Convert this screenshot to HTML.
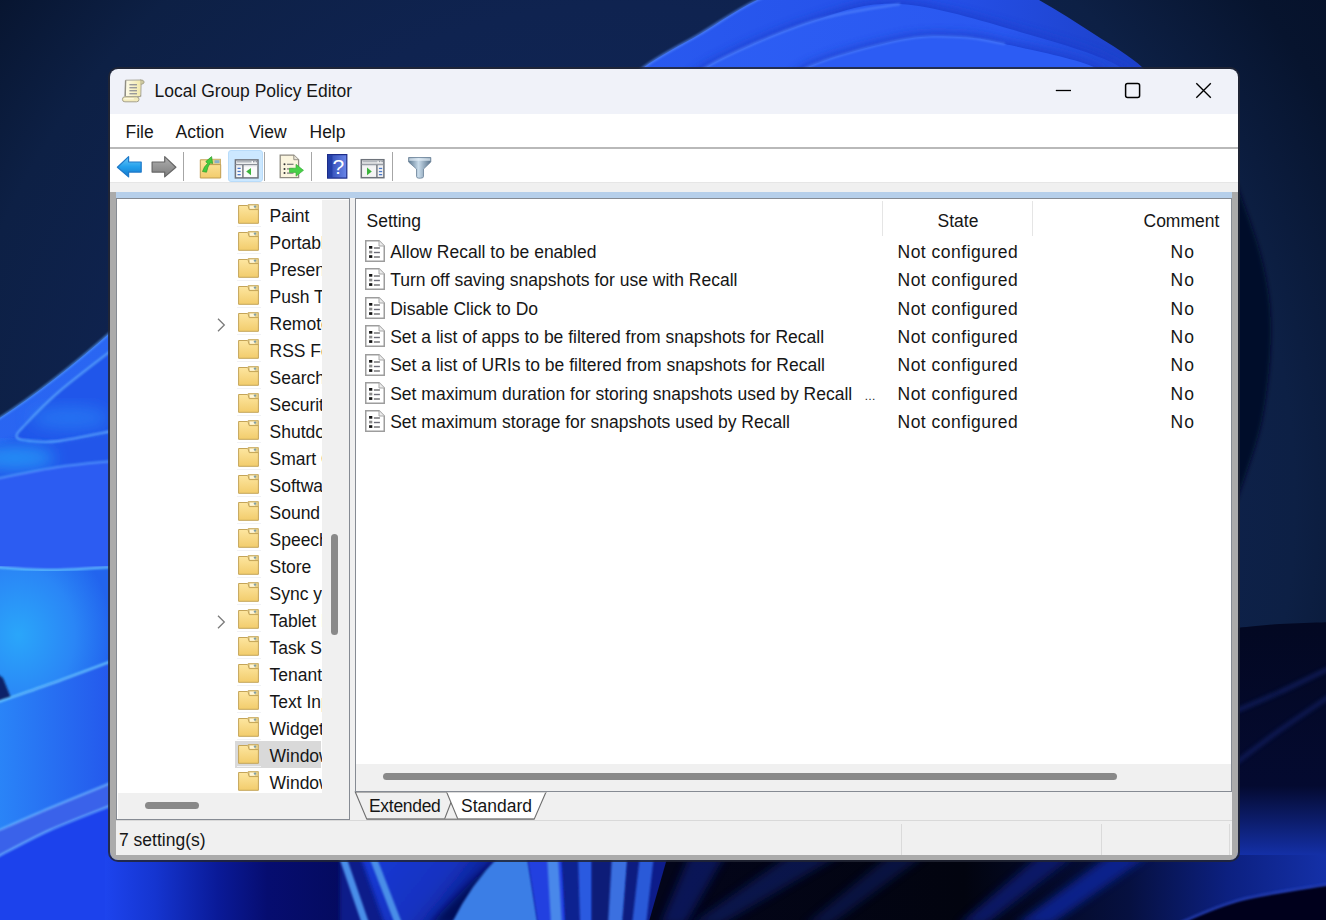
<!DOCTYPE html>
<html><head><meta charset="utf-8"><style>
*{margin:0;padding:0;box-sizing:border-box}
html,body{width:1326px;height:920px;overflow:hidden;background:#0b1a3a}
body{position:relative;font-family:"Liberation Sans",sans-serif}
.bg{position:absolute;left:0;top:0}
.t{position:absolute;line-height:20px;white-space:nowrap;color:#000}
.b{position:absolute}
.ic{position:absolute;overflow:visible}
.win{position:absolute;left:110px;top:69px;width:1128px;height:791px;border-radius:8px;box-shadow:0 0 0 2px rgba(34,38,52,0.85)}
.treeclip{position:absolute;left:117px;top:199px;width:205px;height:593.5px;overflow:hidden}
</style></head>
<body>
<svg width="0" height="0" style="position:absolute">
<defs>
 <linearGradient id="fold" x1="0" y1="0" x2="0" y2="1"><stop offset="0" stop-color="#fde6a0"/><stop offset="1" stop-color="#f2cc6c"/></linearGradient>
 <linearGradient id="arrB" x1="0" y1="0" x2="0" y2="1"><stop offset="0" stop-color="#6cc8f8"/><stop offset="0.5" stop-color="#23a0ec"/><stop offset="1" stop-color="#1478cc"/></linearGradient>
 <linearGradient id="arrG" x1="0" y1="0" x2="0" y2="1"><stop offset="0" stop-color="#b0b0b0"/><stop offset="1" stop-color="#7c7c7c"/></linearGradient>
 <linearGradient id="help" x1="0" y1="0" x2="1" y2="0"><stop offset="0" stop-color="#2a46b0"/><stop offset="1" stop-color="#6a86e8"/></linearGradient>
 <linearGradient id="funnel" x1="0" y1="0" x2="1" y2="0"><stop offset="0" stop-color="#5d7890"/><stop offset="0.45" stop-color="#c8dbea"/><stop offset="1" stop-color="#58728a"/></linearGradient>
 <linearGradient id="scroll" x1="0" y1="0" x2="1" y2="0"><stop offset="0" stop-color="#fdfbea"/><stop offset="1" stop-color="#f2e8a8"/></linearGradient>
</defs></svg><svg class="bg" width="1326" height="920" viewBox="0 0 1326 920"><defs>
 <radialGradient id="gBase" cx="620" cy="500" r="900" gradientUnits="userSpaceOnUse">
  <stop offset="0" stop-color="#12285a"/><stop offset="0.55" stop-color="#0f2350"/><stop offset="0.75" stop-color="#0d2045"/><stop offset="0.9" stop-color="#07142e"/><stop offset="1" stop-color="#06112a"/>
 </radialGradient>
 <linearGradient id="gP1" x1="0" y1="0" x2="1" y2="0">
  <stop offset="0" stop-color="#2a5cf2"/><stop offset="0.6" stop-color="#2550e8"/><stop offset="1" stop-color="#1a3cc0"/>
 </linearGradient>
 <linearGradient id="gP2" x1="0" y1="0" x2="1" y2="0">
  <stop offset="0" stop-color="#2d5ff5"/><stop offset="0.7" stop-color="#2a58f0"/><stop offset="1" stop-color="#1e44d0"/>
 </linearGradient>
 <linearGradient id="gL1" x1="0" y1="0" x2="0" y2="1">
  <stop offset="0" stop-color="#2a66f2"/><stop offset="1" stop-color="#2660f0"/>
 </linearGradient>
 <radialGradient id="gCyan" cx="0.2" cy="0.5" r="0.8">
  <stop offset="0" stop-color="#2aa6fa"/><stop offset="0.6" stop-color="#2a86f6"/><stop offset="1" stop-color="#2264ee"/>
 </radialGradient>
 <linearGradient id="gLow" x1="0" y1="0" x2="1" y2="0">
  <stop offset="0" stop-color="#2a86f8"/><stop offset="1" stop-color="#2458ec"/>
 </linearGradient>
 <linearGradient id="gBotL" x1="0" y1="0" x2="1" y2="0">
  <stop offset="0" stop-color="#1d44ee"/><stop offset="0.2" stop-color="#1535d0"/><stop offset="0.45" stop-color="#0a1a98"/><stop offset="0.65" stop-color="#060d70"/><stop offset="1" stop-color="#040a5c"/>
 </linearGradient>
 <linearGradient id="gRB" x1="0" y1="0" x2="0" y2="1">
  <stop offset="0" stop-color="#030822"/><stop offset="0.7" stop-color="#040a30"/><stop offset="1" stop-color="#1430a8"/>
 </linearGradient>
 <linearGradient id="gBR" x1="668" y1="0" x2="1326" y2="0" gradientUnits="userSpaceOnUse">
  <stop offset="0" stop-color="#03051a"/><stop offset="0.45" stop-color="#02040f"/><stop offset="0.7" stop-color="#061040"/><stop offset="0.85" stop-color="#0c2080"/><stop offset="1" stop-color="#1430a8"/>
 </linearGradient>
 <linearGradient id="gMid" x1="0" y1="0" x2="1" y2="0.4">
  <stop offset="0" stop-color="#1a3ad8"/><stop offset="0.6" stop-color="#1432c0"/><stop offset="1" stop-color="#0a1878"/>
 </linearGradient>
 <filter id="b1" x="-20%" y="-20%" width="140%" height="140%"><feGaussianBlur stdDeviation="1"/></filter>
 <filter id="b2" x="-20%" y="-20%" width="140%" height="140%"><feGaussianBlur stdDeviation="2"/></filter>
 <filter id="b4" x="-20%" y="-20%" width="140%" height="140%"><feGaussianBlur stdDeviation="4"/></filter>
 <filter id="b8" x="-30%" y="-30%" width="160%" height="160%"><feGaussianBlur stdDeviation="8"/></filter>
</defs><rect width="1326" height="920" fill="url(#gBase)"/><path d="M1236.0 182.0 C1240.3 195.0 1256.2 235.3 1262.0 260.0 C1267.8 284.7 1271.0 303.3 1271.0 330.0 C1271.0 356.7 1267.8 391.2 1262.0 420.0 C1256.2 448.8 1240.3 489.2 1236.0 503.0 Z" fill="#050b2c" filter="url(#b2)"/><path d="M1236 628  C1243.3 627.3 1264.3 625.0 1280.0 624.0 C1295.7 623.0 1321.7 622.3 1330.0 622.0 L1330 856 L1236 856 Z" fill="url(#gRB)"/><path d="M1236.0 711.0 C1243.3 707.8 1264.3 699.2 1280.0 692.0 C1295.7 684.8 1321.7 672.0 1330.0 668.0" stroke="#2038a0" stroke-width="3" fill="none" opacity="0.55" filter="url(#b2)"/><path d="M1236.0 763.0 C1243.3 757.5 1264.3 741.2 1280.0 730.0 C1295.7 718.8 1321.7 701.7 1330.0 696.0" stroke="#2038a0" stroke-width="3" fill="none" opacity="0.5" filter="url(#b2)"/><path d="M560.0 160.0 C566.7 151.7 586.2 125.3 600.0 110.0 C613.8 94.7 626.3 80.7 643.0 68.0 C659.7 55.3 681.0 45.3 700.0 34.0 C719.0 22.7 735.3 10.7 757.0 0.0 C778.7 -10.7 806.2 -23.0 830.0 -30.0 C853.8 -37.0 875.0 -42.0 900.0 -42.0 C925.0 -42.0 956.8 -37.0 980.0 -30.0 C1003.2 -23.0 1020.0 -10.7 1039.0 0.0 C1058.0 10.7 1076.7 22.7 1094.0 34.0 C1111.3 45.3 1129.5 55.3 1143.0 68.0 C1156.5 80.7 1165.5 94.7 1175.0 110.0 C1184.5 125.3 1195.8 151.7 1200.0 160.0 Z" fill="url(#gP1)"/><path d="M600.0 110.0 C607.2 103.0 626.3 80.7 643.0 68.0 C659.7 55.3 681.0 45.3 700.0 34.0 C719.0 22.7 735.3 10.7 757.0 0.0 C778.7 -10.7 817.8 -25.0 830.0 -30.0" stroke="#5a90ff" stroke-width="2.5" fill="none" opacity="0.7" filter="url(#b1)"/><path d="M660.0 110.0 C667.4 103.0 679.5 82.7 704.5 68.0 C729.5 53.3 777.4 32.7 810.0 22.0 C842.6 11.3 863.8 2.0 900.0 4.0 C936.2 6.0 990.0 23.3 1027.0 34.0 C1064.0 44.7 1101.5 55.3 1122.0 68.0 C1142.5 80.7 1145.3 103.0 1150.0 110.0 Z" fill="#1a3ccc" filter="url(#b4)" opacity="0.8" transform="translate(0,-4)"/><path d="M660.0 110.0 C667.4 103.0 679.5 82.7 704.5 68.0 C729.5 53.3 777.4 32.7 810.0 22.0 C842.6 11.3 863.8 2.0 900.0 4.0 C936.2 6.0 990.0 23.3 1027.0 34.0 C1064.0 44.7 1101.5 55.3 1122.0 68.0 C1142.5 80.7 1145.3 103.0 1150.0 110.0 Z" fill="url(#gP2)"/><path d="M660.0 110.0 C667.4 103.0 679.5 82.7 704.5 68.0 C729.5 53.3 777.4 32.7 810.0 22.0 C842.6 11.3 885.0 7.0 900.0 4.0" stroke="#5a8cff" stroke-width="2" fill="none" opacity="0.7" filter="url(#b1)"/><path d="M780.0 100.0 C784.3 94.7 786.0 78.0 806.0 68.0 C826.0 58.0 874.3 45.2 900.0 40.0 C925.7 34.8 942.5 36.3 960.0 37.0 C977.5 37.7 982.3 38.8 1005.0 44.0 C1027.7 49.2 1077.7 58.7 1096.0 68.0 C1114.3 77.3 1111.8 94.7 1115.0 100.0 Z" fill="#1a3ccc" filter="url(#b4)" opacity="0.8" transform="translate(0,-4)"/><path d="M780.0 100.0 C784.3 94.7 786.0 78.0 806.0 68.0 C826.0 58.0 874.3 45.2 900.0 40.0 C925.7 34.8 942.5 36.3 960.0 37.0 C977.5 37.7 982.3 38.8 1005.0 44.0 C1027.7 49.2 1077.7 58.7 1096.0 68.0 C1114.3 77.3 1111.8 94.7 1115.0 100.0 Z" fill="#2c5cf4"/><path d="M780.0 100.0 C784.3 94.7 786.0 78.0 806.0 68.0 C826.0 58.0 874.3 45.2 900.0 40.0 C925.7 34.8 942.5 36.3 960.0 37.0 C977.5 37.7 997.5 42.8 1005.0 44.0" stroke="#5a8cff" stroke-width="2" fill="none" opacity="0.6" filter="url(#b1)"/><path d="M-5 421 Q 50 386 112 331 L112 930 L-5 930 Z" fill="url(#gL1)"/><path d="M-5 421 Q 50 386 112 331" stroke="#58a0ff" stroke-width="2" fill="none" opacity="0.8" filter="url(#b1)"/><path d="M112.0 350.0 C103.1 357.0 73.2 379.5 58.7 392.0 C44.2 404.5 32.0 417.5 25.0 425.0 C18.0 432.5 15.8 434.3 16.6 437.0 C17.4 439.7 23.0 440.3 30.0 441.0 C37.0 441.7 45.0 442.7 58.7 441.0 C72.4 439.3 103.1 432.7 112.0 431.0 Z" fill="#2056ea"/><path d="M112 431  C103.1 432.7 72.4 439.3 58.7 441.0 C45.0 442.7 37.0 441.7 30.0 441.0 C23.0 440.3 18.8 437.7 16.6 437.0 L-5 445 L-5 480 L112 480 Z" fill="#2356ea" filter="url(#b2)"/><ellipse cx="70" cy="418" rx="40" ry="12" fill="#2a88f8" opacity="0.55" filter="url(#b8)"/><path d="M112.0 350.0 C103.1 357.0 73.2 379.5 58.7 392.0 C44.2 404.5 32.0 417.5 25.0 425.0 C18.0 432.5 15.8 434.3 16.6 437.0 C17.4 439.7 23.0 440.3 30.0 441.0 C37.0 441.7 45.0 442.7 58.7 441.0 C72.4 439.3 103.1 432.7 112.0 431.0" stroke="#6ab8ff" stroke-width="1.8" fill="none" opacity="0.8" filter="url(#b1)"/><ellipse cx="15" cy="458" rx="40" ry="12" fill="#28a4fa" opacity="0.7" filter="url(#b8)"/><path d="M-5 479  C5.5 477.0 38.5 470.0 58.0 467.0 C77.5 464.0 103.0 462.0 112.0 461.0 L112 568 L-5 568 Z" fill="#2c5cf2"/><path d="M-5.0 479.0 C5.5 477.0 38.5 470.0 58.0 467.0 C77.5 464.0 103.0 462.0 112.0 461.0" stroke="#60a8ff" stroke-width="2" fill="none" opacity="0.7" filter="url(#b1)"/><path d="M-5 567  C4.2 567.5 30.5 570.0 50.0 570.0 C69.5 570.0 101.7 567.5 112.0 567.0 L112 661 L-5 703 Z" fill="url(#gCyan)"/><path d="M-5.0 567.0 C4.2 567.5 30.5 570.0 50.0 570.0 C69.5 570.0 101.7 567.5 112.0 567.0" stroke="#70d0ff" stroke-width="2.2" fill="none" opacity="0.9" filter="url(#b1)"/><path d="M-5 672 L3 678 L11 698 L-5 702 Z" fill="#0c2468" filter="url(#b1)"/><path d="M-5 703  C4.2 699.8 30.5 691.0 50.0 684.0 C69.5 677.0 101.7 664.8 112.0 661.0 L112 783 L-5 832 Z" fill="url(#gLow)"/><path d="M-5.0 703.0 C4.2 699.8 30.5 691.0 50.0 684.0 C69.5 677.0 101.7 664.8 112.0 661.0" stroke="#70d0ff" stroke-width="2.2" fill="none" opacity="0.9" filter="url(#b1)"/><path d="M-5 832  C4.2 828.0 30.5 816.2 50.0 808.0 C69.5 799.8 101.7 786.8 112.0 782.5 L112 805  C101.7 809.2 69.5 821.2 50.0 830.0 C30.5 838.8 4.2 853.3 -5.0 858.0 Z" fill="#3a62ea"/><path d="M-5 858  C4.2 853.3 30.5 838.8 50.0 830.0 C69.5 821.2 101.7 809.2 112.0 805.0 L112 930 L-5 930 Z" fill="#1c42ec"/><path d="M-5.0 832.0 C4.2 828.0 30.5 816.2 50.0 808.0 C69.5 799.8 101.7 786.8 112.0 782.5" stroke="#70b8ff" stroke-width="2" fill="none" opacity="0.85" filter="url(#b1)"/><path d="M-5.0 858.0 C4.2 853.3 30.5 838.8 50.0 830.0 C69.5 821.2 101.7 809.2 112.0 805.0" stroke="#70b8ff" stroke-width="2" fill="none" opacity="0.85" filter="url(#b1)"/><rect x="105" y="855" width="250" height="70" fill="url(#gBotL)"/><rect x="340" y="852" width="330" height="75" fill="#0a1a8a" filter="url(#b2)"/><path d="M360 855 L502 855 Q470 885 451 925 L385 925 Z" fill="url(#gMid)" filter="url(#b2)"/><path d="M430 925 Q470 880 500 858 L505 925 Z" fill="#060d58" filter="url(#b4)"/><path d="M500 855 L527 855 L538 925 L451 925 Q470 885 500 855 Z" fill="#3a7ee6" filter="url(#b1)"/><path d="M342 855 L366 925" stroke="#4a8ee8" stroke-width="7" fill="none" filter="url(#b1)"/><path d="M372 855 L399 925" stroke="#4a8ee8" stroke-width="7" fill="none" filter="url(#b1)"/><path d="M527 855 L562 855 L566 925 L538 925 Z" fill="#2040e0" filter="url(#b1)"/><path d="M547 855 L558 855 L562 925 L551 925 Z" fill="#4a88ea" filter="url(#b1)"/><path d="M562 855 L578 855 L580 925 L566 925 Z" fill="#0c2090" filter="url(#b1)"/><path d="M578 855 L592 855 L592 925 L580 925 Z" fill="#2a5ae0" filter="url(#b1)"/><path d="M592 855 L612 855 L610 925 L592 925 Z" fill="#0a1a78" filter="url(#b1)"/><path d="M612 855 L628 855 L624 925 L608 925 Z" fill="#3a70e0" filter="url(#b1)"/><path d="M628 855 L640 855 L634 925 L622 925 Z" fill="#0c1e80" filter="url(#b1)"/><path d="M640 855 L654 855 L646 925 L632 925 Z" fill="#2a5ad8" filter="url(#b1)"/><path d="M668 855 L1330 855 L1330 925 L648 925 Z" fill="url(#gBR)"/><path d="M690 855 L725 855 L685 925 L660 925 Z" fill="#0e1c70" opacity="0.7" filter="url(#b4)"/><path d="M790 855 L840 855 L720 925 L690 925 Z" fill="#0c1a60" opacity="0.7" filter="url(#b4)"/><path d="M890 855 L925 855 L830 925 L805 925 Z" fill="#0c1a60" opacity="0.6" filter="url(#b4)"/><path d="M1040 855 L1075 855 L985 925 L958 925 Z" fill="#0e1e78" opacity="0.8" filter="url(#b4)"/><path d="M1110 855 L1150 855 L1050 925 L1015 925 Z" fill="#1028a0" opacity="0.8" filter="url(#b4)"/><path d="M1175 925  C1185.8 920.8 1214.2 906.8 1240.0 900.0 C1265.8 893.2 1315.0 886.7 1330.0 884.0 L1330 930 L1175 930 Z" fill="#02051a" filter="url(#b1)"/><path d="M1175.0 925.0 C1185.8 920.8 1214.2 906.8 1240.0 900.0 C1265.8 893.2 1315.0 886.7 1330.0 884.0" stroke="#2f50e0" stroke-width="2.5" fill="none" opacity="0.7" filter="url(#b1)"/></svg><div class="win"></div><div class="b" style="left:110px;top:69px;width:1128.00px;height:45.00px;background:#f0f2f9;border-radius:8px 8px 0 0"></div><div class="b" style="left:110px;top:114px;width:1128.00px;height:32.50px;background:#fff"></div><div class="b" style="left:110px;top:146.5px;width:1128.00px;height:2.00px;background:#b9b9b9"></div><div class="b" style="left:110px;top:148.5px;width:1128.00px;height:33.50px;background:#fff"></div><div class="b" style="left:110px;top:182px;width:1128.00px;height:1.00px;background:#e6e6e6"></div><div class="b" style="left:110px;top:183px;width:1128.00px;height:9.00px;background:#f0f0f0"></div><div class="b" style="left:110px;top:185px;width:1128.00px;height:675.00px;background:#ababab;border-radius:0 0 8px 8px"></div><div class="b" style="left:110px;top:183px;width:1128.00px;height:9.00px;background:#f0f0f0"></div><div class="b" style="left:116px;top:192px;width:1116.00px;height:6.00px;background:#b6cfea"></div><div class="b" style="left:116px;top:198px;width:1116.00px;height:657.00px;background:#f0f0f0"></div><div class="b" style="left:116px;top:198px;width:234.00px;height:622.00px;border:1.5px solid #868b93;background:#fff"></div><div class="b" style="left:322px;top:199.5px;width:26.50px;height:619.00px;background:#f0f0f0"></div><div class="b" style="left:117.5px;top:792.5px;width:231.00px;height:26.00px;background:#f0f0f0"></div><div class="b" style="left:331px;top:534.3px;width:7.20px;height:101.10px;background:#898989;border-radius:4px"></div><div class="b" style="left:145px;top:801.5px;width:53.50px;height:7.00px;background:#898989;border-radius:4px"></div><div class="b" style="left:350px;top:198px;width:4.50px;height:622.00px;background:#f0f0f0"></div><div class="b" style="left:354.5px;top:198px;width:877.50px;height:594.00px;border:1.5px solid #868b93;background:#fff"></div><div class="b" style="left:356px;top:764px;width:874.50px;height:26.50px;background:#f0f0f0"></div><div class="b" style="left:383px;top:773px;width:733.50px;height:7.00px;background:#898989;border-radius:4px"></div><div class="b" style="left:882px;top:201px;width:1.00px;height:35.00px;background:#e5e5e5"></div><div class="b" style="left:1032px;top:201px;width:1.00px;height:35.00px;background:#e5e5e5"></div><div class="b" style="left:116px;top:819.5px;width:1116.00px;height:1.00px;background:#d9d9d9"></div><div class="b" style="left:901px;top:823.5px;width:1.00px;height:31.00px;background:#dadada"></div><div class="b" style="left:1101px;top:823.5px;width:1.00px;height:31.00px;background:#dadada"></div><div class="b" style="left:1228.5px;top:823.5px;width:1.00px;height:31.00px;background:#dadada"></div><svg class="ic" style="left:0;top:0" width="1326" height="920">
<path d="M355.3 792 L366.7 819 L444.6 819 L455 792 Z" fill="#f0f0f0" stroke="#6e6e6e" stroke-width="1.1"/>
<path d="M446.6 792 L457.8 819 L534.3 819 L546 792 Z" fill="#ffffff" stroke="#6e6e6e" stroke-width="1.1"/>
<path d="M446.6 792 L546 792" stroke="#fff" stroke-width="1.2"/>
<path d="M366.7 819.2 L534.3 819.2" stroke="#8a8a8a" stroke-width="1.6"/>
</svg><div class="b" style="left:354.5px;top:790.5px;width:877.50px;height:1.50px;background:#868b93"></div><div class="b" style="left:234.8px;top:741px;width:86.70px;height:26.50px;background:#d9d9d9"></div><svg class="ic" style="left:0;top:0" width="1326" height="920">
<line x1="1055.8" y1="90.5" x2="1071" y2="90.5" stroke="#000" stroke-width="1.3"/>
<rect x="1125.6" y="83.6" width="14" height="14" rx="2" fill="none" stroke="#000" stroke-width="1.5"/>
<path d="M1196.3 83.3 L1210.8 97.8 M1210.8 83.3 L1196.3 97.8" stroke="#000" stroke-width="1.35"/>
</svg><svg class="ic" style="left:118px;top:75px" width="32" height="32" viewBox="0 0 32 32">
<path d="M7.6 5.2 L23.2 5 L22.8 21.6 L7.2 21.6 Z" fill="url(#scroll)" stroke="#a9a79a" stroke-width="1"/>
<path d="M7.6 5.6 L7.2 21.4" stroke="#8f8d84" stroke-width="1.4"/>
<path d="M22.2 5 Q25.8 4.6 26.2 7 Q26 9 23.6 9.2 L22.8 9.2" fill="#cdc8a0" stroke="#a09c80" stroke-width="0.9"/>
<rect x="11.4" y="9.0" width="7.6" height="1.4" fill="#9a9a9a"/>
<rect x="11.4" y="12.0" width="7.6" height="1.4" fill="#9a9a9a"/>
<rect x="11.4" y="15.0" width="7.6" height="1.4" fill="#9a9a9a"/>
<rect x="11.4" y="18.0" width="7.6" height="1.4" fill="#9a9a9a"/>
<rect x="4.4" y="21.8" width="16.6" height="5" rx="2.5" fill="#f3ebbc" stroke="#a6a28c" stroke-width="1"/>
<rect x="6" y="23" width="10" height="1.6" rx="0.8" fill="#fdf8dc"/>
<path d="M19.5 22 Q22.5 22 22.8 20" fill="none" stroke="#a6a28c" stroke-width="0.9"/>
</svg><div class="b" style="left:183.1px;top:151.7px;width:1.20px;height:29.30px;background:#a6a6a6"></div><div class="b" style="left:264.0px;top:151.7px;width:1.20px;height:29.30px;background:#a6a6a6"></div><div class="b" style="left:310.9px;top:151.7px;width:1.20px;height:29.30px;background:#a6a6a6"></div><div class="b" style="left:392.0px;top:151.7px;width:1.20px;height:29.30px;background:#a6a6a6"></div><div class="b" style="left:228.4px;top:150.3px;width:34.40px;height:31.70px;background:#cce8ff;border:1px solid #b9dcfa;border-radius:3px"></div><svg class="ic" style="left:112px;top:150px" width="36" height="32" viewBox="0 0 36 32">
<path d="M5.4 17.2 L16.6 6.6 L16.6 12 L29.2 12 L29.2 22.1 L16.6 22.1 L16.6 26.9 Z" fill="url(#arrB)" stroke="#1e78c8" stroke-width="1.2" stroke-linejoin="round"/>
</svg><svg class="ic" style="left:148px;top:150px" width="34" height="32" viewBox="0 0 34 32">
<path d="M27.9 17.2 L16.7 6.6 L16.7 12 L4.1 12 L4.1 22.1 L16.7 22.1 L16.7 26.9 Z" fill="url(#arrG)" stroke="#666" stroke-width="1.2" stroke-linejoin="round"/>
</svg><svg class="ic" style="left:198px;top:152px" width="26" height="28" viewBox="0 0 26 28">
<rect x="11.5" y="7.2" width="11" height="5.5" fill="#e8d088" stroke="#c4a45a" stroke-width="0.8"/>
<rect x="16.5" y="8.2" width="5" height="3" fill="#8ab0c8"/>
<path d="M2.3 7.8 L10.5 7.8 L12 12.6 L22.7 12.6 L22.7 26 L2.3 26 Z" fill="url(#fold)" stroke="#c09d50" stroke-width="1"/>
<path d="M4.5 19.5 Q 6 14.5 9.5 11.5 L7.8 9.6 L13.6 4.6 L14.6 11.6 L12.4 10.8 Q 9.5 14.5 8.5 20.2 Z" fill="#44cc3c" stroke="#2e9a2a" stroke-width="0.7" stroke-linejoin="round"/>
</svg><svg class="ic" style="left:233px;top:157px" width="28" height="23" viewBox="0 0 28 23">
<rect x="2.4" y="2.9" width="22.6" height="18" fill="#fafafa" stroke="#6e737b" stroke-width="1.5"/>
<rect x="3.6" y="3.8" width="15" height="1.8" fill="#b4b8be"/>
<rect x="20" y="3.8" width="1.6" height="1.6" fill="#9096a0"/><rect x="22.5" y="3.8" width="1.6" height="1.6" fill="#9096a0"/>
<rect x="2.4" y="6.9" width="22.6" height="1.2" fill="#8a8f97"/>
<rect x="3.2" y="8.1" width="21" height="1.2" fill="#d8dade"/>
<rect x="9.2" y="8" width="1.4" height="13" fill="#6e737b"/>
<rect x="4.5" y="10.7" width="3.2" height="1.3" fill="#4a78c8"/>
<rect x="4.5" y="13.8" width="3.2" height="1.3" fill="#4a78c8"/>
<rect x="4.5" y="17" width="3.2" height="1.3" fill="#4a78c8"/>
<path d="M13.2 14.6 L18 11 L18 18.2 Z" fill="#3cb43c"/>
</svg><svg class="ic" style="left:278px;top:153px" width="28" height="27" viewBox="0 0 28 27">
<path d="M2.2 2.2 L15.8 2.2 L20.6 6.7 L20.6 24.6 L2.2 24.6 Z" fill="#fbf5df" stroke="#8e8a80" stroke-width="1.3"/>
<path d="M15.8 2.2 L15.8 6.7 L20.6 6.7" fill="#e8e4d8" stroke="#8e8a80" stroke-width="0.9"/>
<circle cx="6.5" cy="11.3" r="1" fill="#333"/><circle cx="6.5" cy="15.9" r="1" fill="#333"/><circle cx="6.5" cy="20.1" r="1" fill="#333"/>
<rect x="9" y="10.7" width="6.5" height="1.2" fill="#777"/><rect x="9" y="15.3" width="6.5" height="1.2" fill="#777"/><rect x="9" y="19.5" width="6.5" height="1.2" fill="#777"/>
<path d="M11.5 15.2 L18 15.2 L18 11.3 L25.5 17.3 L18 23.2 L18 19.4 L11.5 19.4 Z" fill="#48d048" stroke="#30a830" stroke-width="0.6"/>
</svg><svg class="ic" style="left:326px;top:153px" width="23" height="27" viewBox="0 0 23 27">
<rect x="1.6" y="1.6" width="19.2" height="23.5" fill="url(#help)" stroke="#1c2c88" stroke-width="1.2"/>
<rect x="2.2" y="2.2" width="4.2" height="22.3" fill="#2440a8"/>
<text x="12.4" y="21.2" font-family="Liberation Sans" font-size="21" fill="#fff" text-anchor="middle">?</text>
</svg><svg class="ic" style="left:359px;top:157px" width="27" height="23" viewBox="0 0 27 23">
<rect x="2.3" y="2.7" width="22.6" height="18" fill="#f4f4f4" stroke="#6e737b" stroke-width="1.5"/>
<rect x="3.5" y="3.6" width="15" height="1.8" fill="#b4b8be"/>
<rect x="19.8" y="3.6" width="1.6" height="1.6" fill="#9096a0"/><rect x="22.3" y="3.6" width="1.6" height="1.6" fill="#9096a0"/>
<rect x="2.3" y="6.7" width="22.6" height="1.2" fill="#8a8f97"/>
<rect x="3.1" y="7.9" width="21" height="1.2" fill="#d8dade"/>
<rect x="17.2" y="7.9" width="1.4" height="13" fill="#6e737b"/>
<rect x="19.9" y="10.8" width="3.3" height="1.3" fill="#4a78c8"/>
<rect x="19.9" y="13.9" width="3.3" height="1.3" fill="#4a78c8"/>
<rect x="19.9" y="17" width="3.3" height="1.3" fill="#4a78c8"/>
<path d="M12.8 14.4 L8 10.6 L8 18.2 Z" fill="#3cb43c"/>
</svg><svg class="ic" style="left:406px;top:155px" width="28" height="26" viewBox="0 0 28 26">
<path d="M2.6 2.5 L24.8 2.5 L24.8 7 L17.5 14 L17.5 21.5 Q17.5 23.2 14.5 23.2 L13 23.2 Q10.5 23.2 10.5 21.5 L10.5 14 L2.6 7 Z" fill="url(#funnel)" stroke="#6a8298" stroke-width="0.8"/>
<rect x="3.2" y="3.2" width="21" height="2.6" fill="#e6f0f8" opacity="0.7"/>
</svg><svg class="ic" style="left:214px;top:315.5px" width="14" height="18" viewBox="0 0 14 18"><path d="M4 2.8 L10.3 9 L4 15.2" fill="none" stroke="#7a7a7a" stroke-width="1.3"/></svg><svg class="ic" style="left:214px;top:612.7px" width="14" height="18" viewBox="0 0 14 18"><path d="M4 2.8 L10.3 9 L4 15.2" fill="none" stroke="#7a7a7a" stroke-width="1.3"/></svg><div class="t" style="left:154.50px;top:80.74px;font-size:17.5px;color:#161616;">Local Group Policy Editor</div><div class="t" style="left:125.50px;top:121.74px;font-size:17.5px;color:#161616;">File</div><div class="t" style="left:175.50px;top:121.74px;font-size:17.5px;color:#161616;">Action</div><div class="t" style="left:249.00px;top:121.74px;font-size:17.5px;color:#161616;">View</div><div class="t" style="left:309.50px;top:121.74px;font-size:17.5px;color:#161616;">Help</div><div class="treeclip"><div class="t" style="left:152.50px;top:6.74px;font-size:17.5px;color:#161616;">Paint</div><svg class="ic" style="left:120.6px;top:5.0px" width="21" height="20" viewBox="0 0 21 20"><path d="M10.2 0.6 L20.4 0.6 L20.4 6 L10.2 6 Z" fill="#e6d08c" stroke="#c7a95c" stroke-width="0.9"/>
<rect x="11.8" y="1.6" width="5" height="3.2" fill="#fff6d8"/><circle cx="17" cy="2.6" r="1.2" fill="#7f9ea6"/>
<path d="M0.6 1.5 L9.2 1.5 Q10 1.5 10.3 2.5 L11.2 5.6 L20.4 5.6 L20.4 19.3 L0.6 19.3 Z" fill="url(#fold)" stroke="#c4a458" stroke-width="1"/></svg><div class="b" style="left:120px;top:26.5px;width:24.00px;height:1.00px;background:#f1f2f5"></div><div class="t" style="left:152.50px;top:33.74px;font-size:17.5px;color:#161616;">Portable Operating System</div><svg class="ic" style="left:120.6px;top:32.0px" width="21" height="20" viewBox="0 0 21 20"><path d="M10.2 0.6 L20.4 0.6 L20.4 6 L10.2 6 Z" fill="#e6d08c" stroke="#c7a95c" stroke-width="0.9"/>
<rect x="11.8" y="1.6" width="5" height="3.2" fill="#fff6d8"/><circle cx="17" cy="2.6" r="1.2" fill="#7f9ea6"/>
<path d="M0.6 1.5 L9.2 1.5 Q10 1.5 10.3 2.5 L11.2 5.6 L20.4 5.6 L20.4 19.3 L0.6 19.3 Z" fill="url(#fold)" stroke="#c4a458" stroke-width="1"/></svg><div class="b" style="left:120px;top:53.5px;width:24.00px;height:1.00px;background:#f1f2f5"></div><div class="t" style="left:152.50px;top:60.74px;font-size:17.5px;color:#161616;">Presentation Settings</div><svg class="ic" style="left:120.6px;top:59.0px" width="21" height="20" viewBox="0 0 21 20"><path d="M10.2 0.6 L20.4 0.6 L20.4 6 L10.2 6 Z" fill="#e6d08c" stroke="#c7a95c" stroke-width="0.9"/>
<rect x="11.8" y="1.6" width="5" height="3.2" fill="#fff6d8"/><circle cx="17" cy="2.6" r="1.2" fill="#7f9ea6"/>
<path d="M0.6 1.5 L9.2 1.5 Q10 1.5 10.3 2.5 L11.2 5.6 L20.4 5.6 L20.4 19.3 L0.6 19.3 Z" fill="url(#fold)" stroke="#c4a458" stroke-width="1"/></svg><div class="b" style="left:120px;top:80.5px;width:24.00px;height:1.00px;background:#f1f2f5"></div><div class="t" style="left:152.50px;top:87.74px;font-size:17.5px;color:#161616;">Push To Install</div><svg class="ic" style="left:120.6px;top:86.0px" width="21" height="20" viewBox="0 0 21 20"><path d="M10.2 0.6 L20.4 0.6 L20.4 6 L10.2 6 Z" fill="#e6d08c" stroke="#c7a95c" stroke-width="0.9"/>
<rect x="11.8" y="1.6" width="5" height="3.2" fill="#fff6d8"/><circle cx="17" cy="2.6" r="1.2" fill="#7f9ea6"/>
<path d="M0.6 1.5 L9.2 1.5 Q10 1.5 10.3 2.5 L11.2 5.6 L20.4 5.6 L20.4 19.3 L0.6 19.3 Z" fill="url(#fold)" stroke="#c4a458" stroke-width="1"/></svg><div class="b" style="left:120px;top:107.5px;width:24.00px;height:1.00px;background:#f1f2f5"></div><div class="t" style="left:152.50px;top:114.74px;font-size:17.5px;color:#161616;">Remote Desktop Services</div><svg class="ic" style="left:120.6px;top:113.0px" width="21" height="20" viewBox="0 0 21 20"><path d="M10.2 0.6 L20.4 0.6 L20.4 6 L10.2 6 Z" fill="#e6d08c" stroke="#c7a95c" stroke-width="0.9"/>
<rect x="11.8" y="1.6" width="5" height="3.2" fill="#fff6d8"/><circle cx="17" cy="2.6" r="1.2" fill="#7f9ea6"/>
<path d="M0.6 1.5 L9.2 1.5 Q10 1.5 10.3 2.5 L11.2 5.6 L20.4 5.6 L20.4 19.3 L0.6 19.3 Z" fill="url(#fold)" stroke="#c4a458" stroke-width="1"/></svg><div class="b" style="left:120px;top:134.5px;width:24.00px;height:1.00px;background:#f1f2f5"></div><div class="t" style="left:152.50px;top:141.74px;font-size:17.5px;color:#161616;">RSS Feeds</div><svg class="ic" style="left:120.6px;top:140.0px" width="21" height="20" viewBox="0 0 21 20"><path d="M10.2 0.6 L20.4 0.6 L20.4 6 L10.2 6 Z" fill="#e6d08c" stroke="#c7a95c" stroke-width="0.9"/>
<rect x="11.8" y="1.6" width="5" height="3.2" fill="#fff6d8"/><circle cx="17" cy="2.6" r="1.2" fill="#7f9ea6"/>
<path d="M0.6 1.5 L9.2 1.5 Q10 1.5 10.3 2.5 L11.2 5.6 L20.4 5.6 L20.4 19.3 L0.6 19.3 Z" fill="url(#fold)" stroke="#c4a458" stroke-width="1"/></svg><div class="b" style="left:120px;top:161.5px;width:24.00px;height:1.00px;background:#f1f2f5"></div><div class="t" style="left:152.50px;top:168.74px;font-size:17.5px;color:#161616;">Search</div><svg class="ic" style="left:120.6px;top:167.0px" width="21" height="20" viewBox="0 0 21 20"><path d="M10.2 0.6 L20.4 0.6 L20.4 6 L10.2 6 Z" fill="#e6d08c" stroke="#c7a95c" stroke-width="0.9"/>
<rect x="11.8" y="1.6" width="5" height="3.2" fill="#fff6d8"/><circle cx="17" cy="2.6" r="1.2" fill="#7f9ea6"/>
<path d="M0.6 1.5 L9.2 1.5 Q10 1.5 10.3 2.5 L11.2 5.6 L20.4 5.6 L20.4 19.3 L0.6 19.3 Z" fill="url(#fold)" stroke="#c4a458" stroke-width="1"/></svg><div class="b" style="left:120px;top:188.5px;width:24.00px;height:1.00px;background:#f1f2f5"></div><div class="t" style="left:152.50px;top:195.74px;font-size:17.5px;color:#161616;">Security Center</div><svg class="ic" style="left:120.6px;top:194.0px" width="21" height="20" viewBox="0 0 21 20"><path d="M10.2 0.6 L20.4 0.6 L20.4 6 L10.2 6 Z" fill="#e6d08c" stroke="#c7a95c" stroke-width="0.9"/>
<rect x="11.8" y="1.6" width="5" height="3.2" fill="#fff6d8"/><circle cx="17" cy="2.6" r="1.2" fill="#7f9ea6"/>
<path d="M0.6 1.5 L9.2 1.5 Q10 1.5 10.3 2.5 L11.2 5.6 L20.4 5.6 L20.4 19.3 L0.6 19.3 Z" fill="url(#fold)" stroke="#c4a458" stroke-width="1"/></svg><div class="b" style="left:120px;top:215.5px;width:24.00px;height:1.00px;background:#f1f2f5"></div><div class="t" style="left:152.50px;top:222.74px;font-size:17.5px;color:#161616;">Shutdown Options</div><svg class="ic" style="left:120.6px;top:221.0px" width="21" height="20" viewBox="0 0 21 20"><path d="M10.2 0.6 L20.4 0.6 L20.4 6 L10.2 6 Z" fill="#e6d08c" stroke="#c7a95c" stroke-width="0.9"/>
<rect x="11.8" y="1.6" width="5" height="3.2" fill="#fff6d8"/><circle cx="17" cy="2.6" r="1.2" fill="#7f9ea6"/>
<path d="M0.6 1.5 L9.2 1.5 Q10 1.5 10.3 2.5 L11.2 5.6 L20.4 5.6 L20.4 19.3 L0.6 19.3 Z" fill="url(#fold)" stroke="#c4a458" stroke-width="1"/></svg><div class="b" style="left:120px;top:242.5px;width:24.00px;height:1.00px;background:#f1f2f5"></div><div class="t" style="left:152.50px;top:249.74px;font-size:17.5px;color:#161616;">Smart Card</div><svg class="ic" style="left:120.6px;top:248.0px" width="21" height="20" viewBox="0 0 21 20"><path d="M10.2 0.6 L20.4 0.6 L20.4 6 L10.2 6 Z" fill="#e6d08c" stroke="#c7a95c" stroke-width="0.9"/>
<rect x="11.8" y="1.6" width="5" height="3.2" fill="#fff6d8"/><circle cx="17" cy="2.6" r="1.2" fill="#7f9ea6"/>
<path d="M0.6 1.5 L9.2 1.5 Q10 1.5 10.3 2.5 L11.2 5.6 L20.4 5.6 L20.4 19.3 L0.6 19.3 Z" fill="url(#fold)" stroke="#c4a458" stroke-width="1"/></svg><div class="b" style="left:120px;top:269.5px;width:24.00px;height:1.00px;background:#f1f2f5"></div><div class="t" style="left:152.50px;top:276.74px;font-size:17.5px;color:#161616;">Software Protection Platform</div><svg class="ic" style="left:120.6px;top:275.0px" width="21" height="20" viewBox="0 0 21 20"><path d="M10.2 0.6 L20.4 0.6 L20.4 6 L10.2 6 Z" fill="#e6d08c" stroke="#c7a95c" stroke-width="0.9"/>
<rect x="11.8" y="1.6" width="5" height="3.2" fill="#fff6d8"/><circle cx="17" cy="2.6" r="1.2" fill="#7f9ea6"/>
<path d="M0.6 1.5 L9.2 1.5 Q10 1.5 10.3 2.5 L11.2 5.6 L20.4 5.6 L20.4 19.3 L0.6 19.3 Z" fill="url(#fold)" stroke="#c4a458" stroke-width="1"/></svg><div class="b" style="left:120px;top:296.5px;width:24.00px;height:1.00px;background:#f1f2f5"></div><div class="t" style="left:152.50px;top:303.74px;font-size:17.5px;color:#161616;">Sound Recorder</div><svg class="ic" style="left:120.6px;top:302.0px" width="21" height="20" viewBox="0 0 21 20"><path d="M10.2 0.6 L20.4 0.6 L20.4 6 L10.2 6 Z" fill="#e6d08c" stroke="#c7a95c" stroke-width="0.9"/>
<rect x="11.8" y="1.6" width="5" height="3.2" fill="#fff6d8"/><circle cx="17" cy="2.6" r="1.2" fill="#7f9ea6"/>
<path d="M0.6 1.5 L9.2 1.5 Q10 1.5 10.3 2.5 L11.2 5.6 L20.4 5.6 L20.4 19.3 L0.6 19.3 Z" fill="url(#fold)" stroke="#c4a458" stroke-width="1"/></svg><div class="b" style="left:120px;top:323.5px;width:24.00px;height:1.00px;background:#f1f2f5"></div><div class="t" style="left:152.50px;top:330.74px;font-size:17.5px;color:#161616;">Speech</div><svg class="ic" style="left:120.6px;top:329.0px" width="21" height="20" viewBox="0 0 21 20"><path d="M10.2 0.6 L20.4 0.6 L20.4 6 L10.2 6 Z" fill="#e6d08c" stroke="#c7a95c" stroke-width="0.9"/>
<rect x="11.8" y="1.6" width="5" height="3.2" fill="#fff6d8"/><circle cx="17" cy="2.6" r="1.2" fill="#7f9ea6"/>
<path d="M0.6 1.5 L9.2 1.5 Q10 1.5 10.3 2.5 L11.2 5.6 L20.4 5.6 L20.4 19.3 L0.6 19.3 Z" fill="url(#fold)" stroke="#c4a458" stroke-width="1"/></svg><div class="b" style="left:120px;top:350.5px;width:24.00px;height:1.00px;background:#f1f2f5"></div><div class="t" style="left:152.50px;top:357.74px;font-size:17.5px;color:#161616;">Store</div><svg class="ic" style="left:120.6px;top:356.0px" width="21" height="20" viewBox="0 0 21 20"><path d="M10.2 0.6 L20.4 0.6 L20.4 6 L10.2 6 Z" fill="#e6d08c" stroke="#c7a95c" stroke-width="0.9"/>
<rect x="11.8" y="1.6" width="5" height="3.2" fill="#fff6d8"/><circle cx="17" cy="2.6" r="1.2" fill="#7f9ea6"/>
<path d="M0.6 1.5 L9.2 1.5 Q10 1.5 10.3 2.5 L11.2 5.6 L20.4 5.6 L20.4 19.3 L0.6 19.3 Z" fill="url(#fold)" stroke="#c4a458" stroke-width="1"/></svg><div class="b" style="left:120px;top:377.5px;width:24.00px;height:1.00px;background:#f1f2f5"></div><div class="t" style="left:152.50px;top:384.74px;font-size:17.5px;color:#161616;">Sync your settings</div><svg class="ic" style="left:120.6px;top:383.0px" width="21" height="20" viewBox="0 0 21 20"><path d="M10.2 0.6 L20.4 0.6 L20.4 6 L10.2 6 Z" fill="#e6d08c" stroke="#c7a95c" stroke-width="0.9"/>
<rect x="11.8" y="1.6" width="5" height="3.2" fill="#fff6d8"/><circle cx="17" cy="2.6" r="1.2" fill="#7f9ea6"/>
<path d="M0.6 1.5 L9.2 1.5 Q10 1.5 10.3 2.5 L11.2 5.6 L20.4 5.6 L20.4 19.3 L0.6 19.3 Z" fill="url(#fold)" stroke="#c4a458" stroke-width="1"/></svg><div class="b" style="left:120px;top:404.5px;width:24.00px;height:1.00px;background:#f1f2f5"></div><div class="t" style="left:152.50px;top:411.74px;font-size:17.5px;color:#161616;">Tablet PC</div><svg class="ic" style="left:120.6px;top:410.0px" width="21" height="20" viewBox="0 0 21 20"><path d="M10.2 0.6 L20.4 0.6 L20.4 6 L10.2 6 Z" fill="#e6d08c" stroke="#c7a95c" stroke-width="0.9"/>
<rect x="11.8" y="1.6" width="5" height="3.2" fill="#fff6d8"/><circle cx="17" cy="2.6" r="1.2" fill="#7f9ea6"/>
<path d="M0.6 1.5 L9.2 1.5 Q10 1.5 10.3 2.5 L11.2 5.6 L20.4 5.6 L20.4 19.3 L0.6 19.3 Z" fill="url(#fold)" stroke="#c4a458" stroke-width="1"/></svg><div class="b" style="left:120px;top:431.5px;width:24.00px;height:1.00px;background:#f1f2f5"></div><div class="t" style="left:152.50px;top:438.74px;font-size:17.5px;color:#161616;">Task Scheduler</div><svg class="ic" style="left:120.6px;top:437.0px" width="21" height="20" viewBox="0 0 21 20"><path d="M10.2 0.6 L20.4 0.6 L20.4 6 L10.2 6 Z" fill="#e6d08c" stroke="#c7a95c" stroke-width="0.9"/>
<rect x="11.8" y="1.6" width="5" height="3.2" fill="#fff6d8"/><circle cx="17" cy="2.6" r="1.2" fill="#7f9ea6"/>
<path d="M0.6 1.5 L9.2 1.5 Q10 1.5 10.3 2.5 L11.2 5.6 L20.4 5.6 L20.4 19.3 L0.6 19.3 Z" fill="url(#fold)" stroke="#c4a458" stroke-width="1"/></svg><div class="b" style="left:120px;top:458.5px;width:24.00px;height:1.00px;background:#f1f2f5"></div><div class="t" style="left:152.50px;top:465.74px;font-size:17.5px;color:#161616;">Tenant Restrictions</div><svg class="ic" style="left:120.6px;top:464.0px" width="21" height="20" viewBox="0 0 21 20"><path d="M10.2 0.6 L20.4 0.6 L20.4 6 L10.2 6 Z" fill="#e6d08c" stroke="#c7a95c" stroke-width="0.9"/>
<rect x="11.8" y="1.6" width="5" height="3.2" fill="#fff6d8"/><circle cx="17" cy="2.6" r="1.2" fill="#7f9ea6"/>
<path d="M0.6 1.5 L9.2 1.5 Q10 1.5 10.3 2.5 L11.2 5.6 L20.4 5.6 L20.4 19.3 L0.6 19.3 Z" fill="url(#fold)" stroke="#c4a458" stroke-width="1"/></svg><div class="b" style="left:120px;top:485.5px;width:24.00px;height:1.00px;background:#f1f2f5"></div><div class="t" style="left:152.50px;top:492.74px;font-size:17.5px;color:#161616;">Text Input</div><svg class="ic" style="left:120.6px;top:491.0px" width="21" height="20" viewBox="0 0 21 20"><path d="M10.2 0.6 L20.4 0.6 L20.4 6 L10.2 6 Z" fill="#e6d08c" stroke="#c7a95c" stroke-width="0.9"/>
<rect x="11.8" y="1.6" width="5" height="3.2" fill="#fff6d8"/><circle cx="17" cy="2.6" r="1.2" fill="#7f9ea6"/>
<path d="M0.6 1.5 L9.2 1.5 Q10 1.5 10.3 2.5 L11.2 5.6 L20.4 5.6 L20.4 19.3 L0.6 19.3 Z" fill="url(#fold)" stroke="#c4a458" stroke-width="1"/></svg><div class="b" style="left:120px;top:512.5px;width:24.00px;height:1.00px;background:#f1f2f5"></div><div class="t" style="left:152.50px;top:519.74px;font-size:17.5px;color:#161616;">Widgets</div><svg class="ic" style="left:120.6px;top:518.0px" width="21" height="20" viewBox="0 0 21 20"><path d="M10.2 0.6 L20.4 0.6 L20.4 6 L10.2 6 Z" fill="#e6d08c" stroke="#c7a95c" stroke-width="0.9"/>
<rect x="11.8" y="1.6" width="5" height="3.2" fill="#fff6d8"/><circle cx="17" cy="2.6" r="1.2" fill="#7f9ea6"/>
<path d="M0.6 1.5 L9.2 1.5 Q10 1.5 10.3 2.5 L11.2 5.6 L20.4 5.6 L20.4 19.3 L0.6 19.3 Z" fill="url(#fold)" stroke="#c4a458" stroke-width="1"/></svg><div class="b" style="left:120px;top:539.5px;width:24.00px;height:1.00px;background:#f1f2f5"></div><div class="t" style="left:152.50px;top:546.74px;font-size:17.5px;color:#161616;">Windows AI</div><svg class="ic" style="left:120.6px;top:545.0px" width="21" height="20" viewBox="0 0 21 20"><path d="M10.2 0.6 L20.4 0.6 L20.4 6 L10.2 6 Z" fill="#e6d08c" stroke="#c7a95c" stroke-width="0.9"/>
<rect x="11.8" y="1.6" width="5" height="3.2" fill="#fff6d8"/><circle cx="17" cy="2.6" r="1.2" fill="#7f9ea6"/>
<path d="M0.6 1.5 L9.2 1.5 Q10 1.5 10.3 2.5 L11.2 5.6 L20.4 5.6 L20.4 19.3 L0.6 19.3 Z" fill="url(#fold)" stroke="#c4a458" stroke-width="1"/></svg><div class="b" style="left:120px;top:566.5px;width:24.00px;height:1.00px;background:#f1f2f5"></div><div class="t" style="left:152.50px;top:573.74px;font-size:17.5px;color:#161616;">Windows Calendar</div><svg class="ic" style="left:120.6px;top:572.0px" width="21" height="20" viewBox="0 0 21 20"><path d="M10.2 0.6 L20.4 0.6 L20.4 6 L10.2 6 Z" fill="#e6d08c" stroke="#c7a95c" stroke-width="0.9"/>
<rect x="11.8" y="1.6" width="5" height="3.2" fill="#fff6d8"/><circle cx="17" cy="2.6" r="1.2" fill="#7f9ea6"/>
<path d="M0.6 1.5 L9.2 1.5 Q10 1.5 10.3 2.5 L11.2 5.6 L20.4 5.6 L20.4 19.3 L0.6 19.3 Z" fill="url(#fold)" stroke="#c4a458" stroke-width="1"/></svg><div class="b" style="left:120px;top:593.5px;width:24.00px;height:1.00px;background:#f1f2f5"></div></div><div class="t" style="left:366.50px;top:210.64px;font-size:17.5px;color:#161616;">Setting</div><div class="t" style="left:937.50px;top:210.64px;font-size:17.5px;color:#161616;">State</div><div class="t" style="left:1143.50px;top:210.64px;font-size:17.5px;color:#161616;">Comment</div><svg class="ic" style="left:365px;top:240.0px" width="20" height="22" viewBox="0 0 20 22"><path d="M0.75 0.75 L14 0.75 L19.25 6 L19.25 21.25 L0.75 21.25 Z" fill="#fff" stroke="#9d9d9d" stroke-width="1.5"/>
<path d="M14 0.75 L14 6 L19.25 6" fill="#ececec" stroke="#a8a8a8" stroke-width="1"/>
<rect x="4.1" y="6" width="3.2" height="2.7" fill="#151515"/>
<rect x="4.1" y="10.7" width="3.2" height="2.7" fill="#8a8a8a"/>
<rect x="4.1" y="15.2" width="3.2" height="2.7" fill="#151515"/>
<rect x="8.9" y="7.3" width="6" height="1.4" fill="#6d6d70"/>
<rect x="8.9" y="11.8" width="6" height="1.4" fill="#6d6d78"/>
<rect x="8.9" y="16.3" width="6" height="1.4" fill="#6d6d70"/></svg><div class="t" style="left:390.20px;top:241.94px;font-size:17.5px;color:#161616;">Allow Recall to be enabled</div><div class="t" style="left:897.50px;top:241.94px;font-size:17.5px;color:#161616;letter-spacing:0.5px">Not configured</div><div class="t" style="left:1170.50px;top:241.94px;font-size:17.5px;color:#161616;letter-spacing:1px">No</div><svg class="ic" style="left:365px;top:268.38px" width="20" height="22" viewBox="0 0 20 22"><path d="M0.75 0.75 L14 0.75 L19.25 6 L19.25 21.25 L0.75 21.25 Z" fill="#fff" stroke="#9d9d9d" stroke-width="1.5"/>
<path d="M14 0.75 L14 6 L19.25 6" fill="#ececec" stroke="#a8a8a8" stroke-width="1"/>
<rect x="4.1" y="6" width="3.2" height="2.7" fill="#151515"/>
<rect x="4.1" y="10.7" width="3.2" height="2.7" fill="#8a8a8a"/>
<rect x="4.1" y="15.2" width="3.2" height="2.7" fill="#151515"/>
<rect x="8.9" y="7.3" width="6" height="1.4" fill="#6d6d70"/>
<rect x="8.9" y="11.8" width="6" height="1.4" fill="#6d6d78"/>
<rect x="8.9" y="16.3" width="6" height="1.4" fill="#6d6d70"/></svg><div class="t" style="left:390.20px;top:270.32px;font-size:17.5px;color:#161616;">Turn off saving snapshots for use with Recall</div><div class="t" style="left:897.50px;top:270.32px;font-size:17.5px;color:#161616;letter-spacing:0.5px">Not configured</div><div class="t" style="left:1170.50px;top:270.32px;font-size:17.5px;color:#161616;letter-spacing:1px">No</div><svg class="ic" style="left:365px;top:296.76px" width="20" height="22" viewBox="0 0 20 22"><path d="M0.75 0.75 L14 0.75 L19.25 6 L19.25 21.25 L0.75 21.25 Z" fill="#fff" stroke="#9d9d9d" stroke-width="1.5"/>
<path d="M14 0.75 L14 6 L19.25 6" fill="#ececec" stroke="#a8a8a8" stroke-width="1"/>
<rect x="4.1" y="6" width="3.2" height="2.7" fill="#151515"/>
<rect x="4.1" y="10.7" width="3.2" height="2.7" fill="#8a8a8a"/>
<rect x="4.1" y="15.2" width="3.2" height="2.7" fill="#151515"/>
<rect x="8.9" y="7.3" width="6" height="1.4" fill="#6d6d70"/>
<rect x="8.9" y="11.8" width="6" height="1.4" fill="#6d6d78"/>
<rect x="8.9" y="16.3" width="6" height="1.4" fill="#6d6d70"/></svg><div class="t" style="left:390.20px;top:298.70px;font-size:17.5px;color:#161616;">Disable Click to Do</div><div class="t" style="left:897.50px;top:298.70px;font-size:17.5px;color:#161616;letter-spacing:0.5px">Not configured</div><div class="t" style="left:1170.50px;top:298.70px;font-size:17.5px;color:#161616;letter-spacing:1px">No</div><svg class="ic" style="left:365px;top:325.14px" width="20" height="22" viewBox="0 0 20 22"><path d="M0.75 0.75 L14 0.75 L19.25 6 L19.25 21.25 L0.75 21.25 Z" fill="#fff" stroke="#9d9d9d" stroke-width="1.5"/>
<path d="M14 0.75 L14 6 L19.25 6" fill="#ececec" stroke="#a8a8a8" stroke-width="1"/>
<rect x="4.1" y="6" width="3.2" height="2.7" fill="#151515"/>
<rect x="4.1" y="10.7" width="3.2" height="2.7" fill="#8a8a8a"/>
<rect x="4.1" y="15.2" width="3.2" height="2.7" fill="#151515"/>
<rect x="8.9" y="7.3" width="6" height="1.4" fill="#6d6d70"/>
<rect x="8.9" y="11.8" width="6" height="1.4" fill="#6d6d78"/>
<rect x="8.9" y="16.3" width="6" height="1.4" fill="#6d6d70"/></svg><div class="t" style="left:390.20px;top:327.08px;font-size:17.5px;color:#161616;">Set a list of apps to be filtered from snapshots for Recall</div><div class="t" style="left:897.50px;top:327.08px;font-size:17.5px;color:#161616;letter-spacing:0.5px">Not configured</div><div class="t" style="left:1170.50px;top:327.08px;font-size:17.5px;color:#161616;letter-spacing:1px">No</div><svg class="ic" style="left:365px;top:353.52px" width="20" height="22" viewBox="0 0 20 22"><path d="M0.75 0.75 L14 0.75 L19.25 6 L19.25 21.25 L0.75 21.25 Z" fill="#fff" stroke="#9d9d9d" stroke-width="1.5"/>
<path d="M14 0.75 L14 6 L19.25 6" fill="#ececec" stroke="#a8a8a8" stroke-width="1"/>
<rect x="4.1" y="6" width="3.2" height="2.7" fill="#151515"/>
<rect x="4.1" y="10.7" width="3.2" height="2.7" fill="#8a8a8a"/>
<rect x="4.1" y="15.2" width="3.2" height="2.7" fill="#151515"/>
<rect x="8.9" y="7.3" width="6" height="1.4" fill="#6d6d70"/>
<rect x="8.9" y="11.8" width="6" height="1.4" fill="#6d6d78"/>
<rect x="8.9" y="16.3" width="6" height="1.4" fill="#6d6d70"/></svg><div class="t" style="left:390.20px;top:355.46px;font-size:17.5px;color:#161616;">Set a list of URIs to be filtered from snapshots for Recall</div><div class="t" style="left:897.50px;top:355.46px;font-size:17.5px;color:#161616;letter-spacing:0.5px">Not configured</div><div class="t" style="left:1170.50px;top:355.46px;font-size:17.5px;color:#161616;letter-spacing:1px">No</div><svg class="ic" style="left:365px;top:381.9px" width="20" height="22" viewBox="0 0 20 22"><path d="M0.75 0.75 L14 0.75 L19.25 6 L19.25 21.25 L0.75 21.25 Z" fill="#fff" stroke="#9d9d9d" stroke-width="1.5"/>
<path d="M14 0.75 L14 6 L19.25 6" fill="#ececec" stroke="#a8a8a8" stroke-width="1"/>
<rect x="4.1" y="6" width="3.2" height="2.7" fill="#151515"/>
<rect x="4.1" y="10.7" width="3.2" height="2.7" fill="#8a8a8a"/>
<rect x="4.1" y="15.2" width="3.2" height="2.7" fill="#151515"/>
<rect x="8.9" y="7.3" width="6" height="1.4" fill="#6d6d70"/>
<rect x="8.9" y="11.8" width="6" height="1.4" fill="#6d6d78"/>
<rect x="8.9" y="16.3" width="6" height="1.4" fill="#6d6d70"/></svg><div class="t" style="left:390.20px;top:383.84px;font-size:17.5px;color:#161616;">Set maximum duration for storing snapshots used by Recall</div><div class="t" style="left:897.50px;top:383.84px;font-size:17.5px;color:#161616;letter-spacing:0.5px">Not configured</div><div class="t" style="left:1170.50px;top:383.84px;font-size:17.5px;color:#161616;letter-spacing:1px">No</div><svg class="ic" style="left:365px;top:410.28px" width="20" height="22" viewBox="0 0 20 22"><path d="M0.75 0.75 L14 0.75 L19.25 6 L19.25 21.25 L0.75 21.25 Z" fill="#fff" stroke="#9d9d9d" stroke-width="1.5"/>
<path d="M14 0.75 L14 6 L19.25 6" fill="#ececec" stroke="#a8a8a8" stroke-width="1"/>
<rect x="4.1" y="6" width="3.2" height="2.7" fill="#151515"/>
<rect x="4.1" y="10.7" width="3.2" height="2.7" fill="#8a8a8a"/>
<rect x="4.1" y="15.2" width="3.2" height="2.7" fill="#151515"/>
<rect x="8.9" y="7.3" width="6" height="1.4" fill="#6d6d70"/>
<rect x="8.9" y="11.8" width="6" height="1.4" fill="#6d6d78"/>
<rect x="8.9" y="16.3" width="6" height="1.4" fill="#6d6d70"/></svg><div class="t" style="left:390.20px;top:412.22px;font-size:17.5px;color:#161616;">Set maximum storage for snapshots used by Recall</div><div class="t" style="left:897.50px;top:412.22px;font-size:17.5px;color:#161616;letter-spacing:0.5px">Not configured</div><div class="t" style="left:1170.50px;top:412.22px;font-size:17.5px;color:#161616;letter-spacing:1px">No</div><div class="t" style="left:864.30px;top:385.92px;font-size:11.5px;color:#161616;">…</div><div class="t" style="left:369.00px;top:796.34px;font-size:17.5px;color:#161616;letter-spacing:-0.3px">Extended</div><div class="t" style="left:461.00px;top:796.34px;font-size:17.5px;color:#161616;">Standard</div><div class="t" style="left:119.00px;top:829.94px;font-size:17.5px;color:#161616;">7 setting(s)</div>
</body></html>
